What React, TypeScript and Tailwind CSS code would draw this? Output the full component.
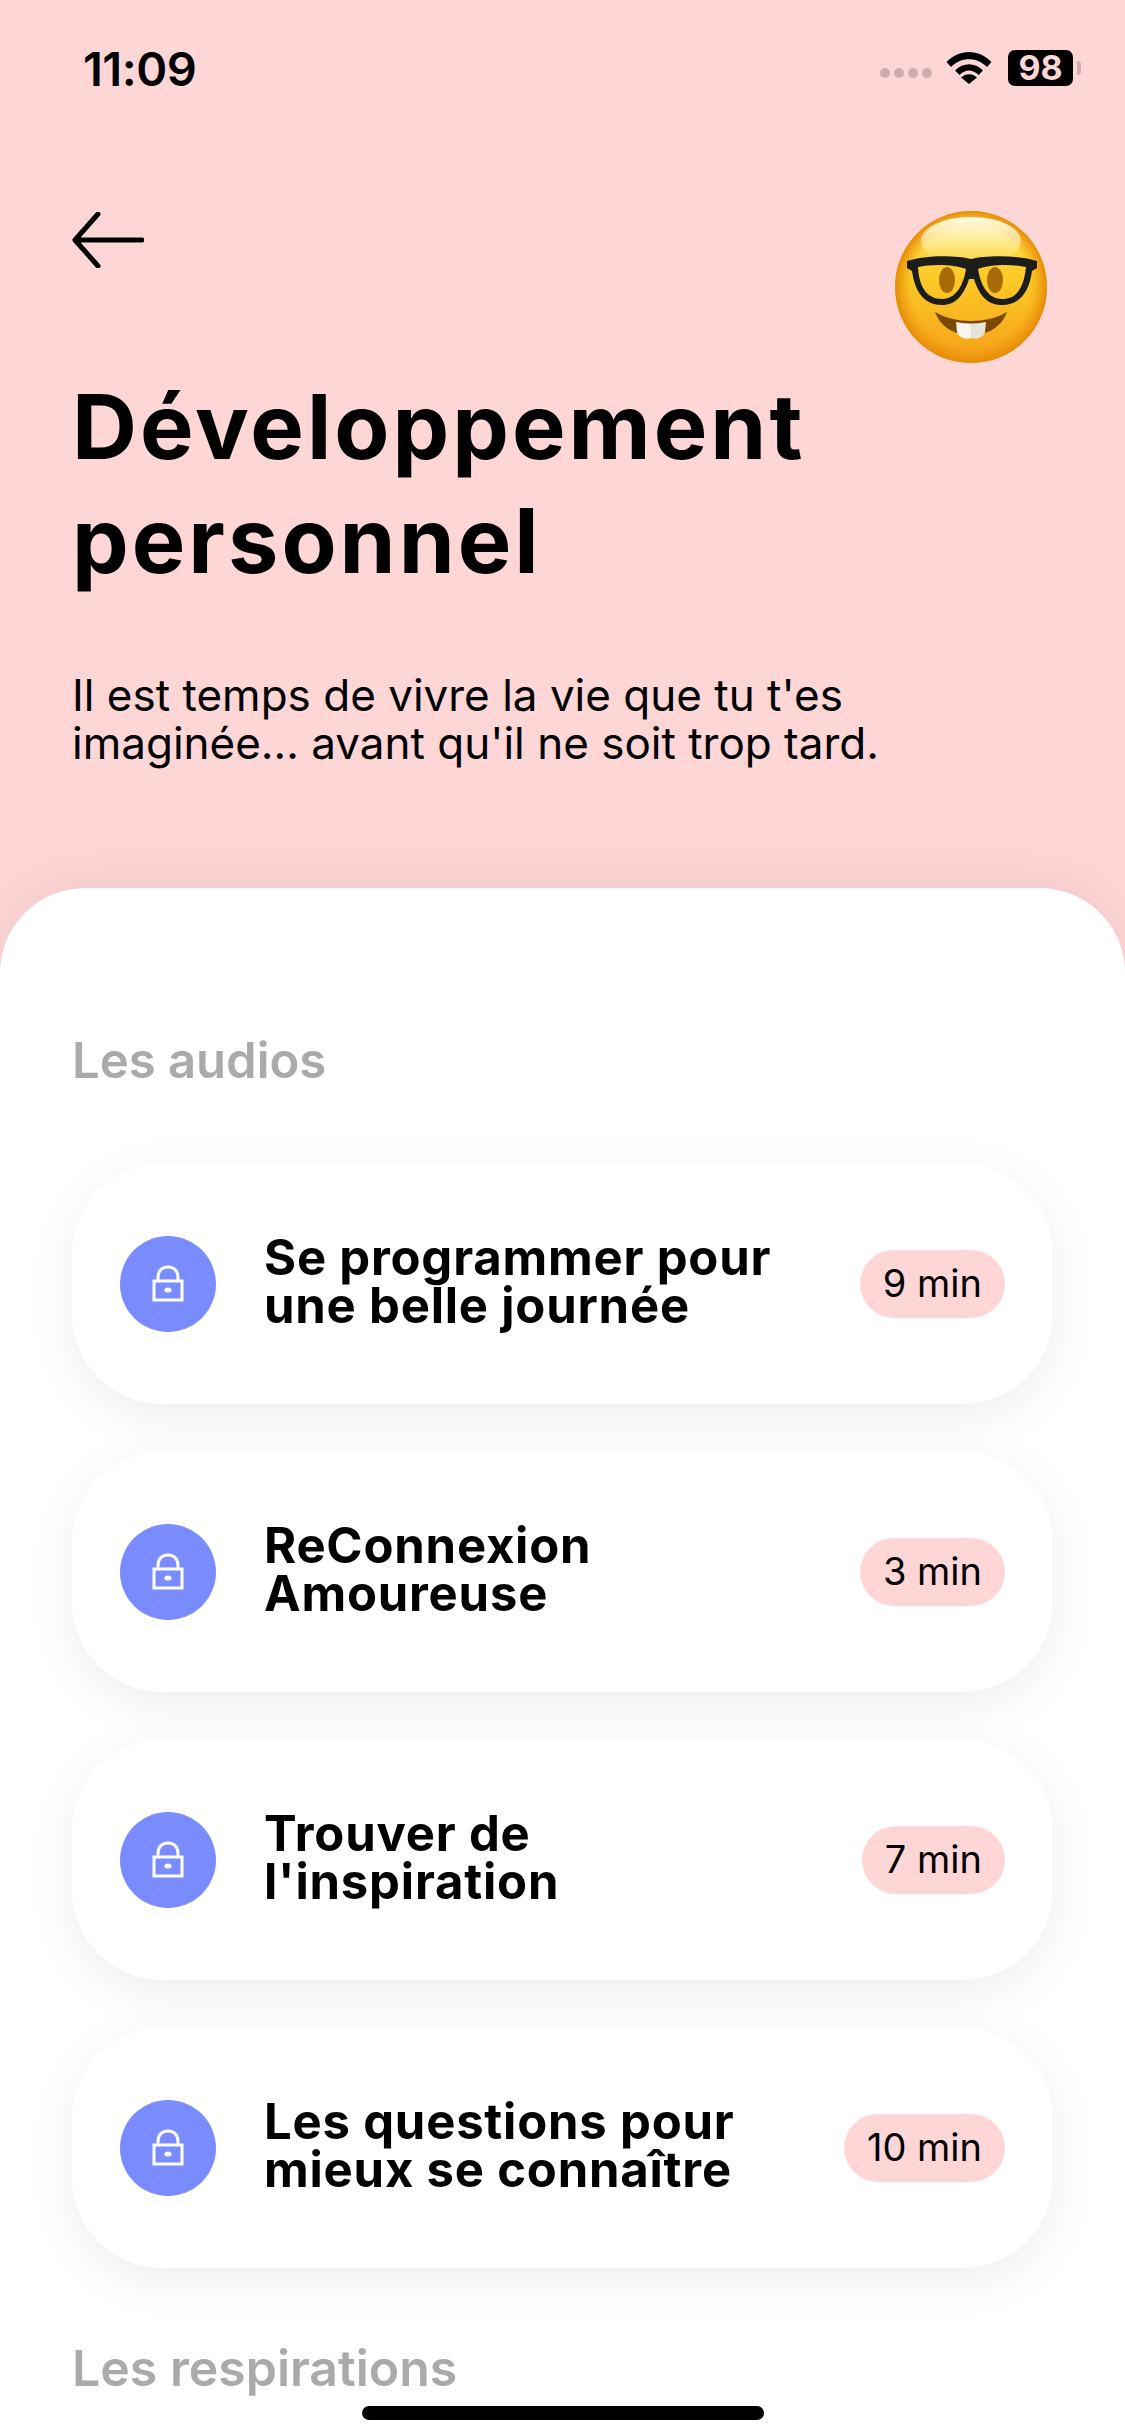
const audios = [
  { title: ['Se programmer pour', 'une belle journée'], time: '9 min' },
  { title: ['ReConnexion', 'Amoureuse'], time: '3 min' },
  { title: ['Trouver de', "l'inspiration"], time: '7 min' },
  { title: ['Les questions pour', 'mieux se connaître'], time: '10 min' },
];

function StatusBar() {
  return (
    <div className="flex h-[136px] items-center justify-between pl-[83px] pr-[44px]">
      <span className="text-[47px] font-semibold leading-none tracking-[-0.5px] text-black">11:09</span>
      <div className="flex items-center">
        <div className="mt-[10px] flex gap-[4px]">
          <span className="h-[10px] w-[10px] rounded-full bg-[#cfabad]" />
          <span className="h-[10px] w-[10px] rounded-full bg-[#cfabad]" />
          <span className="h-[10px] w-[10px] rounded-full bg-[#cfabad]" />
          <span className="h-[10px] w-[10px] rounded-full bg-[#cfabad]" />
        </div>
        <svg className="ml-[14px]" width="46" height="34" viewBox="0 0 46 34">
          <path d="M0.5 11 C13 -2.5 33 -2.5 45.5 11 L41 16 C31 5.5 15 5.5 5 16 Z" fill="#000" />
          <path d="M9 19.5 C17 11 29 11 37 19.5 L32.5 24 C26.5 18 19.5 18 13.5 24 Z" fill="#000" />
          <path d="M23 33 L15 26.5 C19.5 22 26.5 22 31 26.5 Z" fill="#000" />
        </svg>
        <div className="ml-[16px] flex h-[36px] w-[65px] items-center justify-center rounded-[7px] bg-black text-[34px] font-bold leading-none text-[#ffd6d6]">
          98
        </div>
        <span className="ml-[4px] h-[14px] w-[4px] rounded-r-full bg-[#cfabad]" />
      </div>
    </div>
  );
}

function NerdEmoji() {
  return (
    <svg width="156" height="156" viewBox="0 0 156 156">
      <defs>
        <linearGradient id="face" x1="0" y1="0" x2="0" y2="1">
          <stop offset="0%" stopColor="#ffe75c" />
          <stop offset="45%" stopColor="#fdc926" />
          <stop offset="100%" stopColor="#f49f18" />
        </linearGradient>
        <radialGradient id="rim" cx="50%" cy="50%" r="50%">
          <stop offset="78%" stopColor="#f09a10" stopOpacity="0" />
          <stop offset="100%" stopColor="#e68a08" stopOpacity="1" />
        </radialGradient>
        <linearGradient id="shine" x1="0" y1="0" x2="0" y2="1">
          <stop offset="0%" stopColor="#fffce0" />
          <stop offset="100%" stopColor="#fffce0" stopOpacity="0" />
        </linearGradient>
      </defs>
      <circle cx="76" cy="78" r="76" fill="url(#face)" />
      <circle cx="76" cy="78" r="76" fill="url(#rim)" />
      <ellipse cx="76" cy="32" rx="50" ry="24" fill="url(#shine)" />
      <ellipse cx="52" cy="71" rx="8" ry="13" fill="#a86a06" />
      <ellipse cx="100" cy="71" rx="8" ry="13" fill="#a86a06" />
      <path
        d="M12 52 C30 46 60 46 76 50 C92 46 122 46 142 52 L142 59 L137 62 C134 84 124 96 107 96 C92 96 84 86 79 70 L74 70 C69 86 61 96 47 96 C30 96 20 84 17 62 L12 59 Z M23 58 C24 78 32 90 47 90 C60 90 68 78 71 60 C58 55 36 55 23 58 Z M83 60 C86 78 94 90 107 90 C122 90 129 78 131 58 C118 55 96 55 83 60 Z"
        fill="#1d1d1b"
        fillRule="evenodd"
      />
      <path d="M40 103 C60 115 92 115 112 103 C106 120 90 126 76 126 C62 126 46 120 40 103 Z" fill="#7a4a02" />
      <path d="M61 113 C66 114 71 114.500 76 114.500 L76 129 C70 131 63 128 62 123 Z" fill="#f7f5ee" />
      <path d="M91 113 C86 114 81 114.500 76 114.500 L76 129 C82 131 89 128 90 123 Z" fill="#e6e3d8" />
    </svg>
  );
}

function LockIcon() {
  return (
    <svg width="32" height="38" viewBox="0 0 32 38" fill="none">
      <path d="M6 16 V12 C6 6 10 2 16 2 C22 2 26 6 26 12 V16" stroke="#fff" strokeWidth="3" />
      <rect x="2" y="16" width="28" height="19" stroke="#fff" strokeWidth="3" />
      <ellipse cx="16" cy="25" rx="3.6" ry="2.6" fill="#fff" />
    </svg>
  );
}

function AudioCard({ title, time }: { title: string[]; time: string }) {
  return (
    <div className="flex h-[240px] items-center justify-between rounded-[90px] bg-white pl-[48px] pr-[48px] shadow-[0_12px_50px_rgba(0,0,0,0.07)]">
      <div className="flex items-center">
        <div className="flex h-[96px] w-[96px] items-center justify-center rounded-full bg-[#7a8cff]">
          <LockIcon />
        </div>
        <div className="ml-[48px] pb-[5px] text-[49px] font-bold leading-[48px] tracking-[0.8px] text-black">
          <div>{title[0]}</div>
          <div>{title[1]}</div>
        </div>
      </div>
      <div className="flex h-[68px] items-center rounded-full bg-[#ffd6d6] px-[23px] pb-[3px] text-[38px] leading-none text-black">
        {time}
      </div>
    </div>
  );
}

export default function App() {
  return (
    <div className="relative h-[2436px] w-[1125px] overflow-hidden bg-[#ffd6d6] font-['Inter','Noto_Sans',sans-serif]">
      <StatusBar />

      <div className="h-[752px] pl-[72px] pr-[74px]">
        <div className="flex items-start justify-between">
          <svg className="mt-[76px]" width="72" height="56" viewBox="0 0 72 56" fill="none">
            <path d="M70 28 H3 M26 2 L3 28 L26 54" stroke="#000" strokeWidth="5" strokeLinecap="round" strokeLinejoin="round" />
          </svg>
          <div className="mt-[73px]">
            <NerdEmoji />
          </div>
        </div>
        <h1 className="mt-[5px] text-[90px] font-bold leading-[114px] tracking-[3px] text-black">
          Développement
          <br />
          personnel
        </h1>
        <p className="mt-[73px] text-[44px] leading-[48px] text-black">
          Il est temps de vivre la vie que tu t'es
          <br />
          imaginée... avant qu'il ne soit trop tard.
        </p>
      </div>

      <div className="h-[1548px] rounded-t-[85px] bg-white px-[72px] pt-[145px] shadow-[0_-10px_50px_rgba(0,0,0,0.06)]">
        <h2 className="text-[49px] font-semibold leading-[56px] text-[#aaaaaa]">Les audios</h2>
        <div className="mt-[75px] flex flex-col gap-[48px]">
          {audios.map((a) => (
            <AudioCard key={a.time} title={a.title} time={a.time} />
          ))}
        </div>
        <h2 className="mt-[72px] text-[50px] font-semibold leading-[56px] text-[#aaaaaa]">Les respirations</h2>
      </div>

      <div className="absolute bottom-[16px] left-[362px] h-[14px] w-[402px] rounded-full bg-black" />
    </div>
  );
}
